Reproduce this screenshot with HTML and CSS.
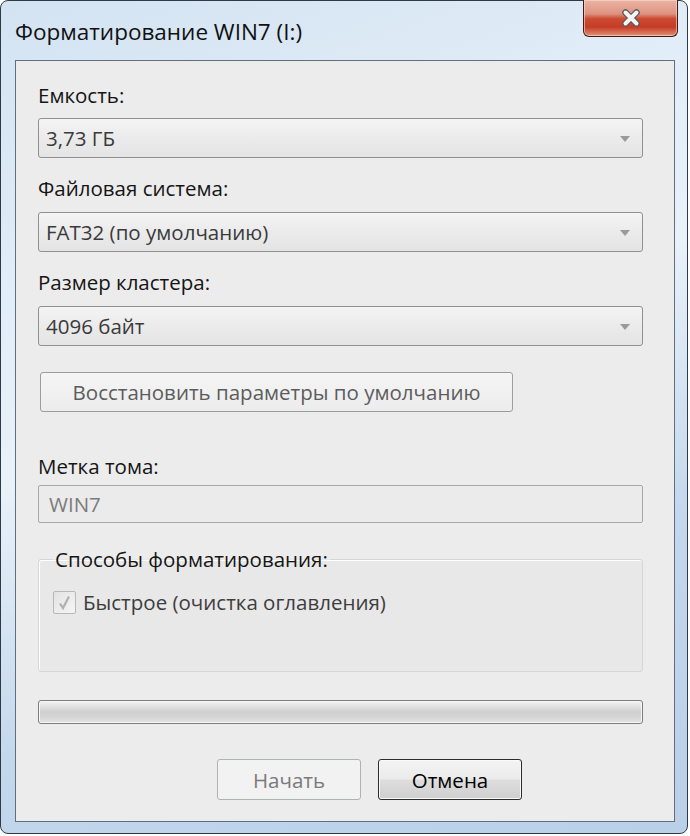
FILE: index.html
```html
<!DOCTYPE html>
<html lang="ru">
<head>
    <meta charset="UTF-8">
    <meta name="viewport" content="width=device-width, initial-scale=1.0">
    <title>Форматирование WIN7 (I:)</title>
    <link rel="stylesheet" href="styles.css">
</head>
<body>
    <div class="window">
        <div class="titlebar">
            <span class="title">Форматирование WIN7 (I:)</span>
            <button class="close" aria-label="Закрыть">
                <svg width="26" height="20" viewBox="0 0 26 20">
                    <path d="M7.5 4.5 L18.5 15.5 M18.5 4.5 L7.5 15.5" stroke="#5a5a5a" stroke-width="6.5" stroke-linecap="round"/>
                    <path d="M7.5 4.5 L18.5 15.5 M18.5 4.5 L7.5 15.5" stroke="#f4f4f4" stroke-width="4" stroke-linecap="round"/>
                </svg>
            </button>
        </div>

        <div class="client">
            <div class="label first">Емкость:</div>
            <div class="combo">
                <span>3,73 ГБ</span>
                <span class="arrow"></span>
            </div>

            <div class="label">Файловая система:</div>
            <div class="combo">
                <span>FAT32 (по умолчанию)</span>
                <span class="arrow"></span>
            </div>

            <div class="label">Размер кластера:</div>
            <div class="combo">
                <span>4096 байт</span>
                <span class="arrow"></span>
            </div>

            <button class="button restore" disabled>Восстановить параметры по умолчанию</button>

            <div class="label volume">Метка тома:</div>
            <div class="textbox">WIN7</div>

            <fieldset class="group">
                <legend>Способы форматирования:</legend>
                <div class="check-row">
                    <span class="checkbox">
                        <svg width="17" height="17" viewBox="0 0 17 17">
                            <path d="M4 9.5 L7 14 L13 2.5" fill="none" stroke="#b0b0b0" stroke-width="2.2"/>
                        </svg>
                    </span>
                    <span class="check-label">Быстрое (очистка оглавления)</span>
                </div>
            </fieldset>

            <div class="progress"></div>

            <div class="actions">
                <button class="button" disabled>Начать</button>
                <button class="button default">Отмена</button>
            </div>
        </div>
    </div>
</body>
</html>
```

FILE: styles.css
```css
body {
    margin: 0;
    background: #ffffff;
    font-family: 'Open Sans', 'Noto Sans', sans-serif;
}
.window {
    width: 688px;
    height: 834px;
    box-sizing: border-box;
    border: 1px solid #2e3a45;
    border-radius: 8px;
    background: linear-gradient(160deg, #d3e3f2 0%, #e3eef8 30%, #e9f1f9 45%, #c4d8ec 70%, #b9d0e8 100%);
    padding: 0 12px 11px 14px;
    display: flex;
    flex-direction: column;
}
.titlebar {
    height: 59px;
    display: flex;
    align-items: center;
    justify-content: space-between;
}
.title {
    font-size: 22.5px;
    color: #111111;
    margin-top: 2px;
}
.close {
    align-self: flex-start;
    width: 95px;
    height: 37px;
    margin-top: -1px;
    margin-right: -3px;
    border: 1px solid #3d1c14;
    border-top: none;
    border-radius: 0 0 6px 6px;
    background: linear-gradient(#eab3a4 0%, #de9482 38%, #cc4a33 52%, #c53c25 75%, #e2917a 100%);
    box-shadow: inset 0 0 0 1px rgba(255, 220, 210, 0.6);
    display: flex;
    align-items: center;
    justify-content: center;
    padding: 0;
}
.client {
    flex: 1;
    border: 1px solid #5f6f80;
    background: #ececec;
    padding: 22px 31px 0 22px;
    display: flex;
    flex-direction: column;
    align-items: flex-start;
}
.label {
    font-size: 20.5px;
    line-height: 24px;
    color: #151515;
    margin: 18px 0 12px 0;
}
.label.first {
    margin-top: 0;
    margin-bottom: 11px;
}
.label.volume {
    margin-top: 42px;
    margin-bottom: 7px;
}
.combo {
    align-self: stretch;
    height: 40px;
    box-sizing: border-box;
    border: 1px solid #8f9090;
    border-radius: 3px;
    background: linear-gradient(#f4f4f4, #ebebeb 50%, #e4e4e4);
    display: flex;
    align-items: center;
    justify-content: space-between;
    padding: 0 12px 0 7px;
    font-size: 20.5px;
    color: #3a3a3a;
}
.arrow {
    width: 0;
    height: 0;
    border-left: 5px solid transparent;
    border-right: 5px solid transparent;
    border-top: 6px solid #9a9a9a;
    margin-top: 2px;
}
.button {
    font-family: inherit;
    font-size: 20.5px;
    height: 41px;
    box-sizing: border-box;
    border-radius: 3px;
    border: 1px solid #adb2b5;
    background: #f2f2f2;
    color: #7a7a7a;
    padding: 0;
}
.restore {
    width: 473px;
    height: 40px;
    margin: 26px 0 0 2px;
    border-color: #9d9d9d;
    background: linear-gradient(#f5f5f5, #ececec);
    color: #5c5c5c;
}
.textbox {
    align-self: stretch;
    height: 38px;
    box-sizing: border-box;
    border: 1px solid #a5a9ac;
    border-radius: 2px;
    background: #ebebeb;
    color: #7b7b7b;
    font-size: 20.5px;
    line-height: 36px;
    padding-left: 10px;
}
.group {
    align-self: stretch;
    margin: 24px 0 0 0;
    padding: 0 14px;
    height: 125px;
    box-sizing: border-box;
    border: 1px solid #d3d7da;
    border-radius: 3px;
    box-shadow: inset 1px 1px 0 #ffffff;
    background: #e8e8e8;
}
.group legend {
    font-size: 20.5px;
    line-height: 24px;
    color: #151515;
    padding: 0 2px;
}
.check-row {
    display: flex;
    align-items: center;
    gap: 7px;
    margin-top: 17px;
}
.checkbox {
    width: 23px;
    height: 23px;
    box-sizing: border-box;
    border: 1px solid #b8b8b8;
    border-radius: 2px;
    background: linear-gradient(135deg, #e3e3e3, #f5f5f5);
    display: flex;
    align-items: center;
    justify-content: center;
}
.check-label {
    font-size: 20.5px;
    color: #3d3d3d;
}
.progress {
    align-self: stretch;
    height: 24px;
    box-sizing: border-box;
    margin-top: 28px;
    border: 1px solid #7c7c7c;
    border-radius: 3px;
    background: linear-gradient(#f3f3f3 0%, #e2e2e2 25%, #cfcfcf 50%, #d6d6d6 75%, #e4e4e4 100%);
    box-shadow: inset 0 0 0 1px #f7f7f7;
}
.actions {
    align-self: stretch;
    display: flex;
    gap: 17px;
    margin-top: 35px;
    padding-left: 179px;
}
.actions .button {
    width: 144px;
}
.default {
    border: 1px solid #2b2b2b;
    background: linear-gradient(#f3f3f3 0%, #ebebeb 48%, #dddddd 52%, #cfcfcf 100%);
    box-shadow: inset 0 0 0 1px #fafafa;
    color: #000000;
}
```
